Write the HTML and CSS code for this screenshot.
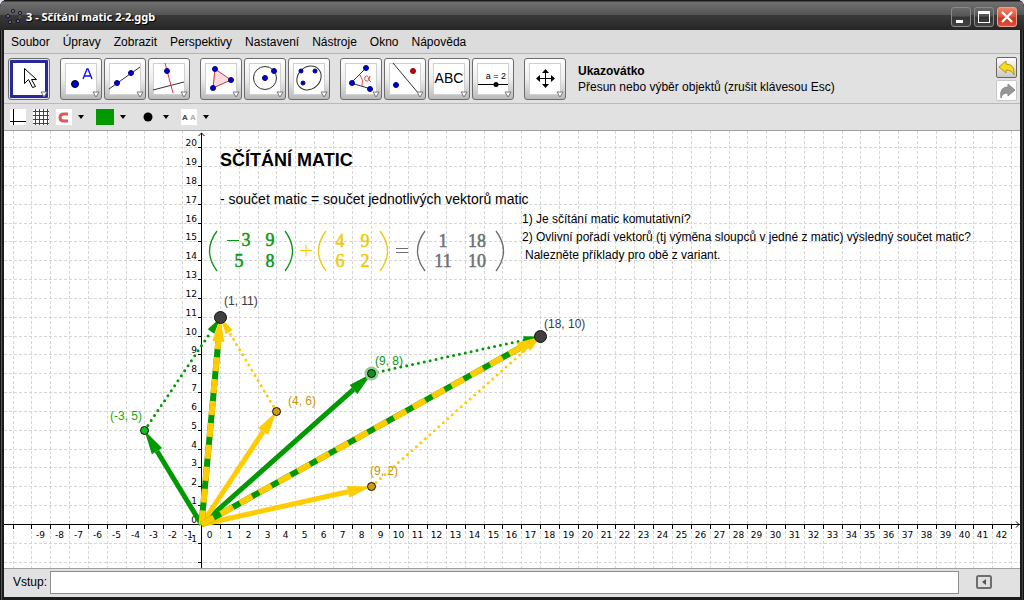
FILE: index.html
```html
<!DOCTYPE html>
<html lang="cs">
<head>
<meta charset="utf-8">
<title>3 - Sčítání matic 2-2.ggb</title>
<link rel="stylesheet" href="styles.css">
</head>
<body>
<div class="window">
  <header class="titlebar">
    <svg class="app-icon" width="16" height="16" viewBox="0 0 16 16" aria-hidden="true">
      <ellipse cx="8" cy="8" rx="6" ry="5" fill="none" stroke="#66666e" stroke-dasharray="2 2"/>
      <g fill="#7878b4" stroke="#15151f"><circle cx="7" cy="2" r="1.6"/><circle cx="14" cy="4" r="1.6"/><circle cx="12" cy="12" r="1.6"/><circle cx="4" cy="13" r="1.6"/><circle cx="2" cy="7" r="1.6"/></g>
    </svg>
    <h1 class="title">3 - Sčítání matic 2-2.ggb</h1>
    <div class="window-controls">
      <button class="win-btn" type="button" aria-label="Minimalizovat"><svg width="18" height="18"><path d="M4 12h7v3H4z" fill="#fff"/></svg></button>
      <button class="win-btn" type="button" aria-label="Maximalizovat"><svg width="18" height="18"><path d="M3 3h12v12H3zM4 6v8h10V6z" fill="#fff" fill-rule="evenodd"/></svg></button>
      <button class="win-btn win-close" type="button" aria-label="Zavřít"><svg width="18" height="18"><path d="M4 4l10 10M14 4L4 14" stroke="#fff" stroke-width="2.4"/></svg></button>
    </div>
  </header>
  <nav class="menubar">
    <button type="button">Soubor</button><button type="button">Úpravy</button><button type="button">Zobrazit</button><button type="button">Perspektivy</button><button type="button">Nastavení</button><button type="button">Nástroje</button><button type="button">Okno</button><button type="button">Nápověda</button>
  </nav>
  <div class="toolbar">
    <div class="tool-group">
      <button class="tool selected" type="button" aria-label="Ukazovátko"><svg width="40" height="40"><path d="M15.500 9.500v15l4-4 4 8 3-1-4-7h5z" fill="#fff" stroke="#000"/><path class="more" d="M32 33h6l-3 5z"/></svg></button>
    </div>
    <div class="tool-group">
      <button class="tool" type="button" aria-label="Bod"><svg width="40" height="40"><circle cx="14" cy="25" r="3.500" fill="#0000e0" stroke="#000"/><path d="M22 20l4-10h1l4 10M23.500 17h6" fill="none" stroke="#1414e6" stroke-width="1.4"/><path class="more" d="M32 33h6l-3 5z"/></svg></button>
      <button class="tool" type="button" aria-label="Přímka"><svg width="40" height="40"><path d="M4 30L35 8" stroke="#333"/><g fill="#0000c8" stroke="#000096"><circle cx="12" cy="24" r="2.500"/><circle cx="26" cy="14" r="2.500"/></g><path class="more" d="M32 33h6l-3 5z"/></svg></button>
      <button class="tool" type="button" aria-label="Kolmice"><svg width="40" height="40"><path d="M4 31l31-8" stroke="#333"/><path d="M16 4l8 30" stroke="#e63246"/><circle cx="18" cy="12" r="2.500" fill="#0000c8" stroke="#000096"/><path class="more" d="M32 33h6l-3 5z"/></svg></button>
    </div>
    <div class="tool-group">
      <button class="tool" type="button" aria-label="Mnohoúhelník"><svg width="40" height="40"><path d="M14 10l16 11-18 8z" fill="#fbdcdc" stroke="#c83246"/><g fill="#0000c8" stroke="#000096"><circle cx="14" cy="10" r="2.500"/><circle cx="30" cy="21" r="2.500"/><circle cx="12" cy="29" r="2.500"/></g><path class="more" d="M32 33h6l-3 5z"/></svg></button>
      <button class="tool" type="button" aria-label="Kružnice"><svg width="40" height="40"><circle cx="20" cy="19" r="11.500" fill="none" stroke="#333"/><g fill="#0000c8" stroke="#000096"><circle cx="20" cy="19" r="2.500"/><circle cx="29" cy="12" r="2.500"/></g><path class="more" d="M32 33h6l-3 5z"/></svg></button>
      <button class="tool" type="button" aria-label="Elipsa"><svg width="40" height="40"><ellipse cx="20" cy="19" rx="13" ry="11" transform="rotate(-42 20 19)" fill="none" stroke="#333"/><g fill="#0000c8" stroke="#000096"><circle cx="12" cy="12" r="2"/><circle cx="26" cy="12" r="2"/><circle cx="14" cy="24" r="2"/></g><path class="more" d="M32 33h6l-3 5z"/></svg></button>
    </div>
    <div class="tool-group">
      <button class="tool" type="button" aria-label="Úhel"><svg width="40" height="40"><path d="M25 9L10 24l20 6" fill="none" stroke="#333"/><path d="M19 16q4 5 2 11" fill="none" stroke="#e64646"/><path d="M29 17q-1 6-4 5-2-1-1-4 3-3 4 3l2 2" fill="none" stroke="#e64646"/><g fill="#0000c8" stroke="#000096"><circle cx="25" cy="9" r="2.500"/><circle cx="11" cy="24" r="2.500"/><circle cx="29" cy="30" r="2.500"/></g><path class="more" d="M32 33h6l-3 5z"/></svg></button>
      <button class="tool" type="button" aria-label="Osová souměrnost"><svg width="40" height="40"><path d="M8 4l26 31" stroke="#333"/><circle cx="28" cy="12" r="2.500" fill="#c80014" stroke="#960000"/><circle cx="11" cy="26" r="2.500" fill="#0000c8" stroke="#000096"/><path class="more" d="M32 33h6l-3 5z"/></svg></button>
      <button class="tool" type="button" aria-label="Text"><svg width="40" height="40"><text class="abc" x="20" y="24" text-anchor="middle">ABC</text><path class="more" d="M32 33h6l-3 5z"/></svg></button>
      <button class="tool" type="button" aria-label="Posuvník"><svg width="40" height="40"><text class="slider-text" x="23" y="20" text-anchor="middle">a = 2</text><path d="M5 25.500h30" stroke="#000"/><circle cx="23" cy="25.500" r="2.500"/><path class="more" d="M32 33h6l-3 5z"/></svg></button>
    </div>
    <div class="tool-group">
      <button class="tool" type="button" aria-label="Posunout nákresnu"><svg width="40" height="40"><path d="M20.500 12v16M12 19.500h17" stroke="#000"/><path d="M17 14l3.500-4 3.500 4zM17 25l3.500 4 3.500-4zM15 16L11 19.500l4 3.500zM26 16l4 3.500-4 3.500z"/><path class="more" d="M32 33h6l-3 5z"/></svg></button>
    </div>
    <p class="tool-help"><strong>Ukazovátko</strong><span>Přesun nebo výběr objektů (zrušit klávesou Esc)</span></p>
    <div class="history">
      <button class="hist-btn hist-active" type="button" aria-label="Zpět"><svg width="18" height="18"><path d="M1 8l7-6v3q9 0 8 11-2-5-8-5v3z" fill="#f5dc1e" stroke="#b49614"/></svg></button>
      <button class="hist-btn" type="button" aria-label="Znovu" disabled><svg width="18" height="18"><path d="M17 8l-7-6v3Q1 5 3 16q1-5 7-5v3z" fill="#969696" stroke="#8c8c8c"/></svg></button>
    </div>
  </div>
  <div class="stylebar">
    <button class="style-btn" type="button" aria-label="Osy"><svg width="16" height="16"><path d="M0 0h16v16H0z" fill="#fff"/><path d="M3.500 0v16M0 12.500h16" stroke="#000"/></svg></button>
    <button class="style-btn" type="button" aria-label="Mřížka"><svg width="16" height="16"><path d="M0 0h16v16H0z" fill="#fff"/><path d="M2.500 0v16M6.500 0v16M10.500 0v16M14.500 0v16M0 2.500h16M0 6.500h16M0 10.500h16M0 14.500h16" stroke="#444"/></svg></button>
    <button class="style-btn with-menu" type="button" aria-label="Přichytávání"><svg width="16" height="16"><path d="M0 0h16v16H0z" fill="#fff"/><path d="M12 5H8q-4 0-4 3.500T8 12h4" fill="none" stroke="#dc5a5a" stroke-width="3"/></svg><svg width="6" height="4"><path d="M0 0h6L3 4z"/></svg></button>
    <button class="style-btn with-menu" type="button" aria-label="Barva"><svg width="18" height="16"><path d="M0 0h18v16H0z" fill="#009900"/></svg><svg width="6" height="4"><path d="M0 0h6L3 4z"/></svg></button>
    <button class="style-btn with-menu wide" type="button" aria-label="Styl bodu"><svg width="16" height="16"><circle cx="8" cy="8" r="4.500"/></svg><svg width="6" height="4"><path d="M0 0h6L3 4z"/></svg></button>
    <button class="style-btn with-menu" type="button" aria-label="Popis"><svg width="16" height="16"><path d="M0 0h16v16H0z" fill="#fff"/><text class="label-a" x="1" y="11">A</text><text class="label-a faint" x="9" y="11">A</text></svg><svg width="6" height="4"><path d="M0 0h6L3 4z"/></svg></button>
  </div>
  <main class="canvas">
    <svg class="graph" id="graph" role="img" aria-label="Nákresna: sčítání matic">
      <g id="grid"></g>
      <g id="axes"></g>
      <g id="vectors"></g>
      <g class="labels">
        <text x="220" y="174" fill="#3c3c3c">(1, 11)</text>
        <text x="540" y="197" fill="#3c3c3c">(18, 10)</text>
        <text x="371" y="234" fill="#0a9614">(9, 8)</text>
        <text x="284" y="274" fill="#c8960a">(4, 6)</text>
        <text x="106" y="289" fill="#14aa14">(-3, 5)</text>
        <text x="366" y="344" fill="#c8960a">(9, 2)</text>
      </g>
      <text class="heading" x="216" y="35">SČÍTÁNÍ MATIC</text>
      <text class="lead" x="216" y="73">- součet matic = součet jednotlivých vektorů matic</text>
      <g class="question">
        <text x="518" y="92">1) Je sčítání matic komutativní?</text>
        <text x="518" y="110">2) Ovlivní pořadí vektorů (tj výměna sloupců v jedné z matic) výsledný součet matic?</text>
        <text x="521" y="128">Nalezněte příklady pro obě z variant.</text>
      </g>
      <g class="matrix green">
        <path class="paren" d="M213 100q-15 20 0 40M281 100q15 20 0 40"/>
        <path d="M223 109h12v1h-12z"/>
        <text x="242" y="115">3</text><text x="266" y="115">9</text><text x="235" y="136">5</text><text x="266" y="136">8</text>
      </g>
      <g class="matrix yellow">
        <path d="M296 119h12v1h-12zM301.500 113.500h1v12h-1z"/>
        <path class="paren" d="M322 100q-15 20 0 40M376 100q15 20 0 40"/>
        <text x="336" y="116">4</text><text x="361" y="116">9</text><text x="336" y="136">6</text><text x="361" y="136">2</text>
      </g>
      <g class="matrix grey">
        <path d="M392 117h12v1h-12zM392 121h12v1h-12z"/>
        <path class="paren" d="M421 100q-15 20 0 40M492 100q15 20 0 40"/>
        <text x="439" y="116">1</text><text x="473" y="116">18</text><text x="439" y="136">11</text><text x="473" y="136">10</text>
      </g>
    </svg>
  </main>
  <form class="inputbar">
    <label for="cmd">Vstup:</label>
    <input id="cmd" type="text" autocomplete="off">
    <button class="help-btn" type="button" aria-label="Nápověda ke vstupu"><svg width="16" height="14"><rect x="1" y="1" width="14" height="12" rx="1.500" fill="#e0e0e0" stroke="#6e6e6e" stroke-width="2"/><path d="M10 4v6L6 7z" fill="#555"/></svg></button>
  </form>
</div>
<script src="graph.js"></script>
</body>
</html>
```

FILE: styles.css
```css
* { box-sizing: border-box; }

body {
  margin: 0;
  background: #dfe3ea;
  font-family: "Liberation Sans", Arial, sans-serif;
  font-size: 12px;
  color: #000;
}

button {
  margin: 0;
  padding: 0;
  border: 0;
  background: none;
  font: inherit;
  color: inherit;
}

svg { display: block; }

.window {
  display: flex;
  flex-direction: column;
  height: 100vh;
  padding: 0 4px 3px;
  background: #1c1c1c;
  border-radius: 7px 7px 0 0;
  box-shadow: inset 1px 0 #111, inset 2px 0 #555, inset -1px 0 #111, inset -2px 0 #444;
  overflow: hidden;
}

.titlebar {
  display: flex;
  align-items: center;
  gap: 4px;
  height: 30px;
  margin: 0 -4px;
  padding: 3px 7px 0 6px;
  background: linear-gradient(#1a1a1a 0, #1a1a1a 1px, #707070 2px, #545454 15px, #3a3a3a 15px, #262626 30px);
  flex: none;
}

.title {
  flex: 1;
  margin: 0;
  font-family: "Noto Sans", "Open Sans", sans-serif;
  font-size: 11px;
  font-weight: bold;
  color: #fff;
  text-shadow: 1px 1px 1px #000;
}

.window-controls { display: flex; gap: 3px; }

.win-btn {
  width: 20px;
  height: 20px;
  border: 1px solid #8a8a8a;
  border-radius: 3px;
  background: linear-gradient(#6a6a6a, #555 45%, #333 50%, #444);
}

.win-close {
  border-color: #f0a090;
  background: linear-gradient(#ee8068, #e0503a 50%, #cc3420 55%, #e05038);
}

.menubar {
  display: flex;
  align-items: center;
  gap: 13px;
  height: 24px;
  padding: 0 7px;
  background: #dcdcdc;
  border-bottom: 1px solid #b4b4b4;
  flex: none;
}

.toolbar {
  display: flex;
  align-items: center;
  gap: 10px;
  height: 50px;
  padding: 0 3px 0 4px;
  background: #e1e1e1;
  border-bottom: 1px solid #b9b9b9;
  flex: none;
}

.tool-group { display: flex; gap: 2px; }

.tool {
  width: 42px;
  height: 42px;
  border: 1px solid #6c6c6c;
  border-radius: 3px;
  background:
    linear-gradient(#fff, #fff) center / 30px 30px no-repeat,
    linear-gradient(#d0d0d0, #d0d0d0) center / 32px 32px no-repeat,
    linear-gradient(#fff, #eee 50%, #b9b9b9);
}

.selected {
  background: #fff;
  box-shadow: inset 0 0 0 1px #e6e6f0, inset 0 0 0 4px #28289b;
}

.more { fill: #fff; stroke: #777; }
.abc { font-size: 14px; }
.slider-text { font-size: 9px; }

.tool-help {
  display: flex;
  flex: 1;
  flex-direction: column;
  margin: 0;
  padding-left: 2px;
  line-height: 16px;
}

.history { display: flex; flex-direction: column; gap: 2px; }

.hist-btn {
  width: 21px;
  height: 21px;
  padding: 1px;
  border: 1px solid #c8c8c8;
  border-radius: 2px;
  background: #fff;
}

.hist-active {
  border-color: #666;
  background: linear-gradient(#fff, #c8c8c8);
}

.stylebar {
  display: flex;
  align-items: center;
  gap: 7px;
  height: 27px;
  padding: 0 6px;
  background: #e1e1e1;
  border-bottom: 1px solid #a0a0a0;
  flex: none;
}

.with-menu {
  display: flex;
  align-items: center;
  gap: 6px;
  padding-right: 5px;
}

.wide { gap: 7px; padding: 0 5px 0 2px; }

.label-a { font-size: 8px; font-weight: bold; fill: #444; }
.faint { fill: #aaa; }

.canvas {
  flex: 1;
  min-height: 0;
  background: #fff;
}

.graph { width: 100%; height: 100%; }

.grid-line {
  stroke: #d6d6d6;
  stroke-dasharray: 3 2;
  shape-rendering: crispEdges;
}

.axis-line { fill: none; stroke: #000; shape-rendering: crispEdges; }
.axis-arrow { fill: none; stroke: #000; }
.axis-number { font-family: "DejaVu Sans", sans-serif; font-size: 9px; }
.dotted { stroke-width: 3; stroke-linecap: round; stroke-dasharray: 0 6; }
.labels { font-size: 12px; }
.heading { font-size: 18px; font-weight: bold; }
.lead { font-size: 14px; }
.question { font-size: 12px; }

.matrix {
  font-family: "Liberation Serif", "Times New Roman", serif;
  font-size: 18px;
}

.matrix text { text-anchor: middle; stroke-width: 0.5; }
.paren { fill: none; stroke-width: 1.3; }
.green { fill: #0a9614; stroke: #0a9614; }
.yellow { fill: #f0c80a; stroke: #f0c80a; }
.grey { fill: #6e6e6e; stroke: #6e6e6e; }
.matrix path:not(.paren) { stroke: none; }

.inputbar {
  display: flex;
  align-items: center;
  gap: 3px;
  height: 29px;
  padding: 0 28px 2px 9px;
  background: #e1e1e1;
  border-top: 1px solid #a0a0a0;
  flex: none;
}

.inputbar input {
  flex: 1;
  min-width: 0;
  height: 23px;
  border: 1px solid #8c8c8c;
  background: #fff;
  font: inherit;
}

.help-btn { margin-left: 14px; }
```

FILE: graph.js
```js
const NS = "http://www.w3.org/2000/svg";
const unit = 18.84;
const origin = { x: 197.5, y: 393.5 };
const green = "#009900";
const yellow = "#ffcc00";

function add(parent, tag, attrs, text) {
  const node = document.createElementNS(NS, tag);
  for (const key in attrs) node.setAttribute(key, attrs[key]);
  if (text !== undefined) node.textContent = text;
  parent.appendChild(node);
}

const px = (x) => Math.round(origin.x - 0.5 + x * unit) + 0.5;
const py = (y) => Math.floor(origin.y - y * unit) + 0.5;

function drawAxes() {
  const grid = document.getElementById("grid");
  const axes = document.getElementById("axes");
  const { width, height } = document.getElementById("graph").getBoundingClientRect();
  grid.replaceChildren();
  axes.replaceChildren();

  for (let i = -Math.floor(origin.x / unit); px(i) < width; i++) {
    const x = px(i);
    add(grid, "path", { class: "grid-line", d: `M${x} 0V${height}` });
    add(axes, "path", { class: "axis-line", d: `M${x} ${origin.y}v4` });
    if (i >= -9 && px(i) < width - 20) {
      const shift = i === -1 ? 6 : i === 0 ? 8 : 9;
      add(axes, "text", { class: "axis-number", x: x + shift, y: 407, "text-anchor": "middle" }, i);
    }
  }
  for (let i = Math.floor(origin.y / unit); py(i) < height; i--) {
    const y = py(i);
    add(grid, "path", { class: "grid-line", d: `M0 ${y}H${width}` });
    add(axes, "path", { class: "axis-line", d: `M${origin.x} ${y}h-4` });
    if (i >= -1) add(axes, "text", { class: "axis-number", x: 193, y: y - 2, "text-anchor": "end" }, i);
  }
  add(axes, "path", { class: "axis-line", d: `M0 ${origin.y}H${width}M${origin.x} 2V${height}` });
  add(axes, "path", { class: "axis-arrow", d: `M${origin.x - 3} 5l3 -3l3 3M${width - 4} ${origin.y - 3}l3 3l-3 3` });
}

function arrow(from, to, color, style) {
  const layer = document.getElementById("vectors");
  const [x1, y1, x2, y2] = [px(from[0]), py(from[1]), px(to[0]), py(to[1])];
  const length = Math.hypot(x2 - x1, y2 - y1);
  const [ux, uy] = [(x2 - x1) / length, (y2 - y1) / length];
  const head = style === "dotted" ? 17 : 24;
  const half = style === "dotted" ? 4 : 6;
  const [bx, by] = [x2 - ux * head, y2 - uy * head];
  const line = { d: `M${x1} ${y1}L${bx} ${by}`, fill: "none", stroke: color, "stroke-width": 5 };
  if (style === "dotted") line.class = "dotted";
  if (style === "mixed") {
    add(layer, "path", { ...line, stroke: green, "stroke-width": 6 });
    Object.assign(line, { "stroke-width": 6, "stroke-dasharray": "14 8" });
  }
  add(layer, "path", line);
  add(layer, "polygon", {
    points: `${x2},${y2} ${bx - uy * half},${by + ux * half} ${bx + uy * half},${by - ux * half}`,
    fill: color
  });
}

function point(x, y, r, fill) {
  add(document.getElementById("vectors"), "circle", { cx: px(x), cy: py(y), r, fill, stroke: "#111" });
}

drawAxes();
window.addEventListener("resize", drawAxes);

arrow([-3, 5], [1, 11], green, "dotted");
arrow([4, 6], [1, 11], yellow, "dotted");
arrow([9, 8], [18, 10], green, "dotted");
arrow([9, 2], [18, 10], yellow, "dotted");
arrow([0, 0], [-3, 5], green);
arrow([0, 0], [9, 8], green);
arrow([0, 0], [4, 6], yellow);
arrow([0, 0], [9, 2], yellow);
arrow([0, 0], [1, 11], yellow, "mixed");
arrow([0, 0], [18, 10], yellow, "mixed");

add(document.getElementById("vectors"), "circle", { cx: px(9), cy: py(8), r: 7, fill: "#96cd96" });
point(-3, 5, 4, "#14be14");
point(9, 8, 4, "#0a9614");
point(4, 6, 4, "#d29b0f");
point(9, 2, 4, "#d29b0f");
point(1, 11, 6, "#404040");
point(18, 10, 6, "#404040");
```
